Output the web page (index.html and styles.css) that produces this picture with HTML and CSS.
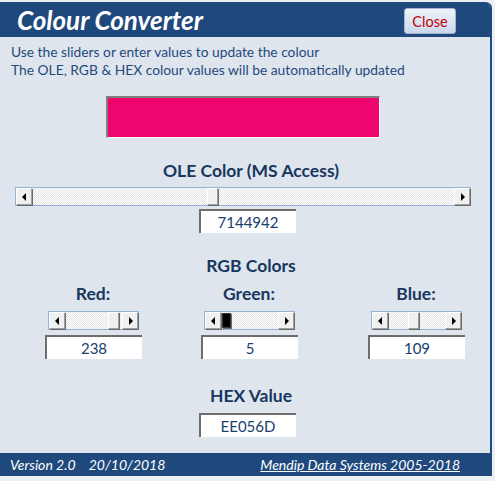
FILE: index.html
```html
<!DOCTYPE html>
<html lang="en">
<head>
  <meta charset="UTF-8">
  <meta name="viewport" content="width=device-width, initial-scale=1.0">
  <title>Colour Converter</title>
  <link rel="stylesheet" href="styles.css">
</head>
<body>
  <div class="window">
    <header class="titlebar">
      <h1>Colour Converter</h1>
      <button class="close" type="button">Close</button>
    </header>

    <main class="content">
      <p class="intro">
        Use the sliders or enter values to update the colour<br>
        The OLE, RGB &amp; HEX colour values will be automatically updated
      </p>

      <div class="swatch" style="background:#EE056D"></div>

      <section class="group">
        <h2>OLE Color (MS Access)</h2>
        <div class="scrollbar wide">
          <span class="arrow left"></span>
          <span class="track"><span class="thumb" style="margin-left:175px"></span></span>
          <span class="arrow right"></span>
        </div>
        <div class="field">7144942</div>
      </section>

      <section class="group">
        <h2>RGB Colors</h2>
        <div class="channels">
          <div class="channel">
            <h3>Red:</h3>
            <div class="scrollbar">
              <span class="arrow left"></span>
              <span class="track"><span class="thumb" style="margin-left:43px"></span></span>
              <span class="arrow right"></span>
            </div>
            <div class="field">238</div>
          </div>
          <div class="channel">
            <h3>Green:</h3>
            <div class="scrollbar">
              <span class="arrow left"></span>
              <span class="track"><span class="thumb active" style="margin-left:1px"></span></span>
              <span class="arrow right"></span>
            </div>
            <div class="field">5</div>
          </div>
          <div class="channel">
            <h3>Blue:</h3>
            <div class="scrollbar">
              <span class="arrow left"></span>
              <span class="track"><span class="thumb" style="margin-left:20px"></span></span>
              <span class="arrow right"></span>
            </div>
            <div class="field">109</div>
          </div>
        </div>
      </section>

      <section class="group hex">
        <h2>HEX Value</h2>
        <div class="field">EE056D</div>
      </section>
    </main>

    <footer class="footer">
      <span>Version 2.0&nbsp;&nbsp;&nbsp; 20/10/2018</span>
      <a href="#">Mendip Data Systems 2005-2018</a>
    </footer>
  </div>
</body>
</html>
```

FILE: styles.css
```css
:root {
  font-family: Lato, "Open Sans", sans-serif;
}
*, ::before, ::after {
  box-sizing: border-box;
}
body {
  margin: 0;
  background: #eceff3;
}
h1, h2, h3, p {
  margin: 0;
}

/* window frame */
.window {
  width: 492px;
  margin-top: 2px;
  border-right: 2px solid #1f497d;
  border-top-right-radius: 6px;
  overflow: hidden;
}
.titlebar {
  height: 35px;
  display: flex;
  align-items: center;
  justify-content: space-between;
  padding: 0 34px 0 17px;
  background: #1f497d;
}
.titlebar h1 {
  color: #fff;
  font-size: 26px;
  font-style: italic;
  font-weight: 700;
}
.close {
  width: 52px;
  height: 26px;
  margin-top: 3px;
  padding: 0;
  font: inherit;
  font-size: 14.5px;
  color: #c00000;
  background: linear-gradient(#eef2f9, #cbd8ec);
  border: 1px solid #a3b5d2;
  border-radius: 3px;
}

/* body */
.content {
  background: #dfe5ed;
  padding: 6px 0 16px;
}
.intro {
  padding-left: 11px;
  font-size: 13.8px;
  line-height: 18px;
  color: #1f497d;
}
.swatch {
  width: 274px;
  height: 42px;
  margin: 17px 0 0 106px;
  border-top: 2px solid #7f7f7f;
  border-left: 2px solid #7f7f7f;
  border-bottom: 1px solid #fff;
  border-right: 1px solid #fff;
}
.group {
  display: flex;
  flex-direction: column;
  align-items: center;
  margin-top: 23px;
}
.group h2 {
  margin-left: 12px;
}
.group h2, .channel h3 {
  font-size: 17.5px;
  line-height: 20px;
  font-weight: 700;
  color: #17375e;
}
.group > .field {
  margin: 3px 0 0 4px;
}
.hex {
  margin-top: 27px;
}
.hex > .field {
  margin-top: 7px;
}

/* scroll bars */
.scrollbar {
  display: flex;
  width: 91px;
  height: 19px;
  margin-top: 6px;
  border: 1px solid #95b3d7;
}
.scrollbar.wide {
  width: 456px;
  margin-left: -4px;
}
.arrow, .thumb {
  position: relative;
  flex: none;
  width: 16px;
  height: 17px;
  background: #f0f0f0;
  border-top: 1px solid #fff;
  border-left: 1px solid #fff;
  border-right: 1px solid #a0a0a0;
  border-bottom: 1px solid #a0a0a0;
  box-shadow: 1px 1px 0 #696969;
}
.arrow::before {
  content: "";
  position: absolute;
  top: 4px;
  border-top: 4px solid transparent;
  border-bottom: 4px solid transparent;
}
.arrow.left::before {
  left: 5px;
  border-right: 4px solid #000;
}
.arrow.right::before {
  left: 6px;
  border-left: 4px solid #000;
}
.track {
  flex: 1;
  display: flex;
  background: repeating-conic-gradient(#e4e4e4 0 25%, #fff 0 50%) 0 0 / 2px 2px;
}
.thumb {
  width: 11px;
}
.thumb.active {
  background: #000;
  border-color: #3a3a3a;
  margin-top: 1px;
  height: 15px;
  width: 9px;
}

/* rgb columns */
.channels {
  display: grid;
  grid-template-columns: 156px 156px 178px;
  align-self: flex-start;
  margin: 8px 0 0 15px;
}
.channel {
  display: flex;
  flex-direction: column;
  align-items: center;
}
.channel .scrollbar {
  margin-top: 7px;
}
.channel .field {
  margin-top: 5px;
}

/* text boxes */
.field {
  width: 97px;
  height: 24px;
  padding-top: 2px;
  text-align: center;
  font-size: 15px;
  color: #17406e;
  background: #fff;
  border-top: 2px solid #6d6d6d;
  border-left: 2px solid #6d6d6d;
}

.footer {
  height: 23px;
  display: flex;
  align-items: center;
  justify-content: space-between;
  padding: 0 30px 0 10px;
  background: #1f497d;
  color: #fff;
  font-size: 14px;
  font-style: italic;
}
.footer a {
  color: #fff;
}
```
